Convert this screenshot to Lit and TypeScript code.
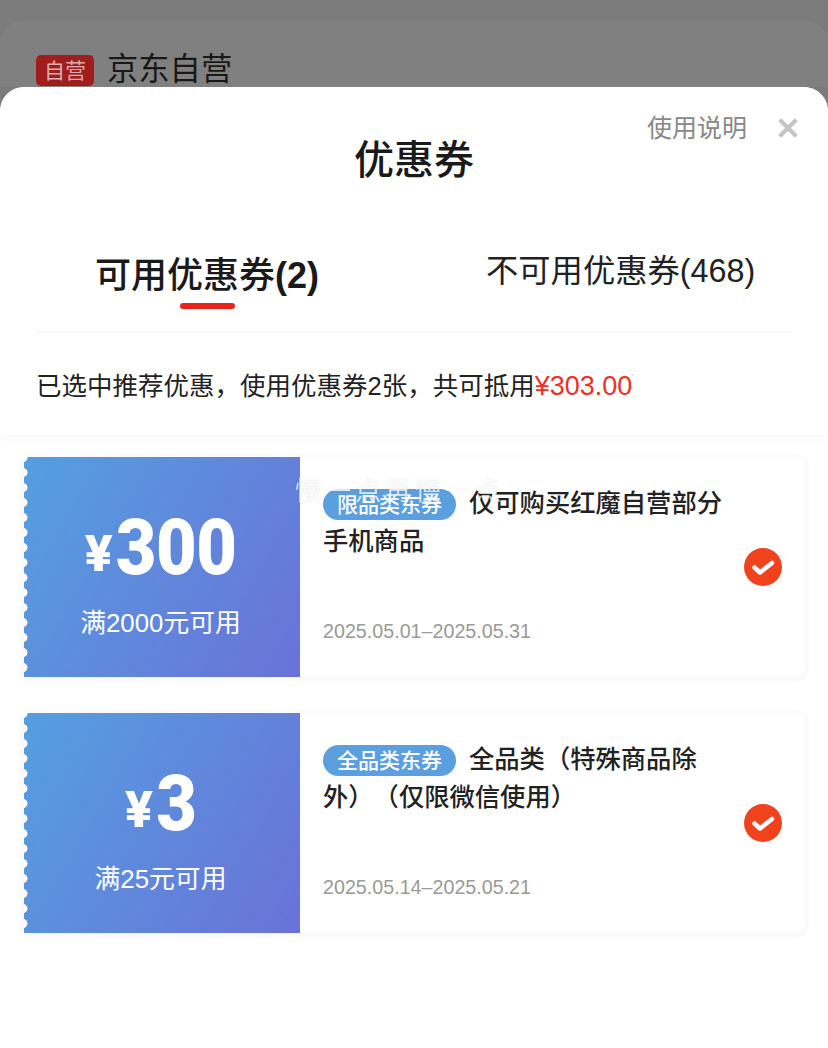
import { LitElement, html, css } from "lit";
import { customElement } from "lit/decorators.js";

const coupons = [
  { amount: "300", cond: "满2000元可用", tag: "限品类东券", title: "仅可购买红魔自营部分手机商品", date: "2025.05.01–2025.05.31" },
  { amount: "3", cond: "满25元可用", tag: "全品类东券", title: "全品类（特殊商品除外）（仅限微信使用）", date: "2025.05.14–2025.05.21" },
];

@customElement("app-root")
export class AppRoot extends LitElement {
  static styles = css`
    :host { display: block; width: 828px; height: 1048px; overflow: hidden; position: relative; background: #7b7b7b;
      font-family: "Liberation Sans", "Noto Sans CJK SC", sans-serif; color: #1a1a1a; text-spacing-trim: space-all; }
    .behind { height: 67px; margin: 20px 0 0; padding: 0 36px; box-sizing: border-box; background: #808080; border-radius: 24px 24px 0 0;
      display: flex; align-items: flex-start; gap: 13px; overflow: hidden; }
    .badge { margin-top: 35px; width: 58px; height: 31px; border-radius: 5px; background: #a01d1e; color: #dcaeae; font-size: 21px; line-height: 31px; text-align: center; }
    .brand { margin-top: 31px; padding-top: 1px; font-size: 31.3px; line-height: 35px; color: #181818; }
    .sheet { height: 961px; background: #fff; border-radius: 24px 24px 0 0; overflow: hidden; }
    .top { height: 348px; box-sizing: border-box; background: #fff; box-shadow: 0 2px 12px rgba(0,0,0,.04); border-radius: 24px 24px 0 0; padding: 0 36px; display: flex; flex-direction: column; }
    .head { height: 118px; position: relative; display: flex; justify-content: center; }
    .title { font-size: 40px; line-height: 58px; font-weight: 500; margin-top: 44px; }
    .help { position: absolute; right: 45px; top: 23px; font-size: 25px; line-height: 36px; color: #888; }
    .close { position: absolute; right: -7px; top: 30px; width: 22px; height: 22px; }
    .tabs { height: 127px; border-bottom: 1px solid #f2f2f2; display: flex; position: relative; }
    .tab { position: relative; white-space: nowrap; }
    .tab.on { margin-left: 59px; margin-top: 45px; font-size: 36px; line-height: 52px; font-weight: 500; }
    .tab.on b { font-weight: 700; }
    .tab.off { margin-left: 167px; margin-top: 42px; font-size: 32.3px; line-height: 48px; color: #222; }
    .bar { position: absolute; left: 85px; top: 53px; width: 55px; height: 6px; border-radius: 3px; background: #e9251a; }
    .sum { font-size: 25.5px; line-height: 36px; margin-top: 35px; white-space: nowrap; color: #222; }
    .sum b { font-weight: 400; font-size: 27px; color: #ee3124; }
    .list { padding: 22px 23px 0 24px; display: flex; flex-direction: column; gap: 36px; position: relative; }
    .coupon { height: 220px; display: flex; background: #fff; border-radius: 0 8px 8px 0; box-shadow: 0 1px 8px rgba(0,0,0,.06); }
    .left { width: 276px; box-sizing: border-box; padding-right: 3px; flex: none; position: relative; overflow: hidden; color: #fff; display: flex; flex-direction: column; align-items: center;
      background: linear-gradient(120deg, #559fe0, #6a72d8); }
    .left::before { content: ""; position: absolute; left: 0; top: 0; bottom: 0; width: 5px;
      background: radial-gradient(circle at -1px 50%, #fff 4.2px, transparent 4.8px) 0 8px / 5px 15px repeat-y; }
    .price { display: flex; align-items: baseline; font-family: "Roboto", sans-serif; font-weight: 900; margin-top: 49px; height: 84px; }
    .yen { font-family: "Inter", sans-serif; font-size: 50px; line-height: 84px; font-weight: 800; margin-right: 3px; transform: translateY(-3px); }
    .num { display: inline-block; font-size: 78px; line-height: 84px; letter-spacing: -0.5px; transform: scaleX(0.9); }
    .cond { font-size: 25.8px; line-height: 36px; margin-top: 15px; }
    .right { flex: 1; min-width: 0; padding: 27px 22px 0 23px; position: relative; display: flex; flex-direction: column; }
    .text { width: 402px; font-size: 25.3px; line-height: 38px; font-weight: 500; color: #222; }
    .tag { display: inline-block; width: 133px; height: 31px; margin-right: 13px; border-radius: 16px; background: #5aa0e0; color: #fff; font-size: 21px; line-height: 31px; font-weight: 500; text-align: center; vertical-align: 0; }
    .date { position: absolute; left: 23px; top: 160px; font-size: 19.7px; line-height: 28px; color: #999; white-space: nowrap; }
    .check { position: absolute; right: 23px; top: 91px; width: 38px; height: 38px; }
    .toast { position: absolute; left: 295px; top: 36px; font-size: 26px; line-height: 40px; letter-spacing: 4px; color: rgba(255,255,255,.8); text-shadow: 0 0 2px rgba(0,0,0,.1); white-space: nowrap; pointer-events: none; }
  `;

  render() {
    return html`
      <div class="behind"><div class="badge">自营</div><div class="brand">京东自营</div></div>
      <div class="sheet">
        <div class="top">
          <div class="head">
            <div class="title">优惠券</div>
            <div class="help">使用说明</div>
            <svg class="close" viewBox="0 0 24 24"><path d="M3 3 21 21M21 3 3 21" stroke="#c4c4c4" stroke-width="4.5" fill="none"/></svg>
          </div>
          <div class="tabs">
            <div class="tab on">可用优惠券<b>(2)</b><span class="bar"></span></div>
            <div class="tab off">不可用优惠券(468)</div>
          </div>
          <div class="sum">已选中推荐优惠，使用优惠券2张，共可抵用<b>¥303.00</b></div>
        </div>
        <div class="list">
          ${coupons.map((c) => html`
            <div class="coupon">
              <div class="left">
                <div class="price"><span class="yen">¥</span><span class="num" style="margin: 0 ${-c.amount.length * 2.25}px">${c.amount}</span></div>
                <div class="cond">${c.cond}</div>
              </div>
              <div class="right">
                <div class="text"><span class="tag">${c.tag}</span>${c.title}</div>
                <div class="date">${c.date}</div>
                <svg class="check" viewBox="0 0 38 38">
                  <circle cx="19" cy="19" r="19" fill="#f0421c"/>
                  <path d="M10.5 19.5 16 24.5 28 15" stroke="#fff" stroke-width="4.5" fill="none" stroke-linecap="round" stroke-linejoin="round"/>
                </svg>
              </div>
            </div>`)}
          <div class="toast">慢一点再慢一点</div>
        </div>
      </div>
    `;
  }
}
